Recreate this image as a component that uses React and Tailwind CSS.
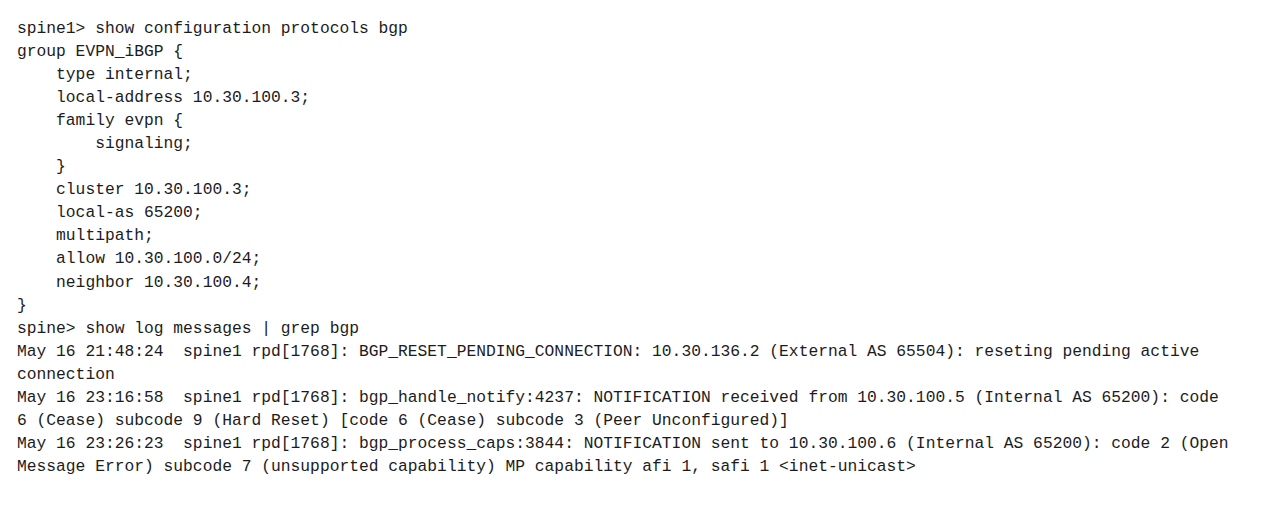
export default function App() {
  const lines = [
    "spine1> show configuration protocols bgp",
    "group EVPN_iBGP {",
    "    type internal;",
    "    local-address 10.30.100.3;",
    "    family evpn {",
    "        signaling;",
    "    }",
    "    cluster 10.30.100.3;",
    "    local-as 65200;",
    "    multipath;",
    "    allow 10.30.100.0/24;",
    "    neighbor 10.30.100.4;",
    "}",
    "spine> show log messages | grep bgp",
    "May 16 21:48:24  spine1 rpd[1768]: BGP_RESET_PENDING_CONNECTION: 10.30.136.2 (External AS 65504): reseting pending active",
    "connection",
    "May 16 23:16:58  spine1 rpd[1768]: bgp_handle_notify:4237: NOTIFICATION received from 10.30.100.5 (Internal AS 65200): code",
    "6 (Cease) subcode 9 (Hard Reset) [code 6 (Cease) subcode 3 (Peer Unconfigured)]",
    "May 16 23:26:23  spine1 rpd[1768]: bgp_process_caps:3844: NOTIFICATION sent to 10.30.100.6 (Internal AS 65200): code 2 (Open",
    "Message Error) subcode 7 (unsupported capability) MP capability afi 1, safi 1 <inet-unicast>",
  ];
  return (
    <div className="w-[1271px] h-[505px] bg-white overflow-hidden pl-[17px] pt-[17px]">
      <div className="font-['Liberation_Mono','Courier_New',monospace] text-[16.3px] leading-[23.05px] text-[#1c1c1c] whitespace-pre">
        {lines.map((l, i) => (
          <div key={i}>{l}</div>
        ))}
      </div>
    </div>
  );
}
